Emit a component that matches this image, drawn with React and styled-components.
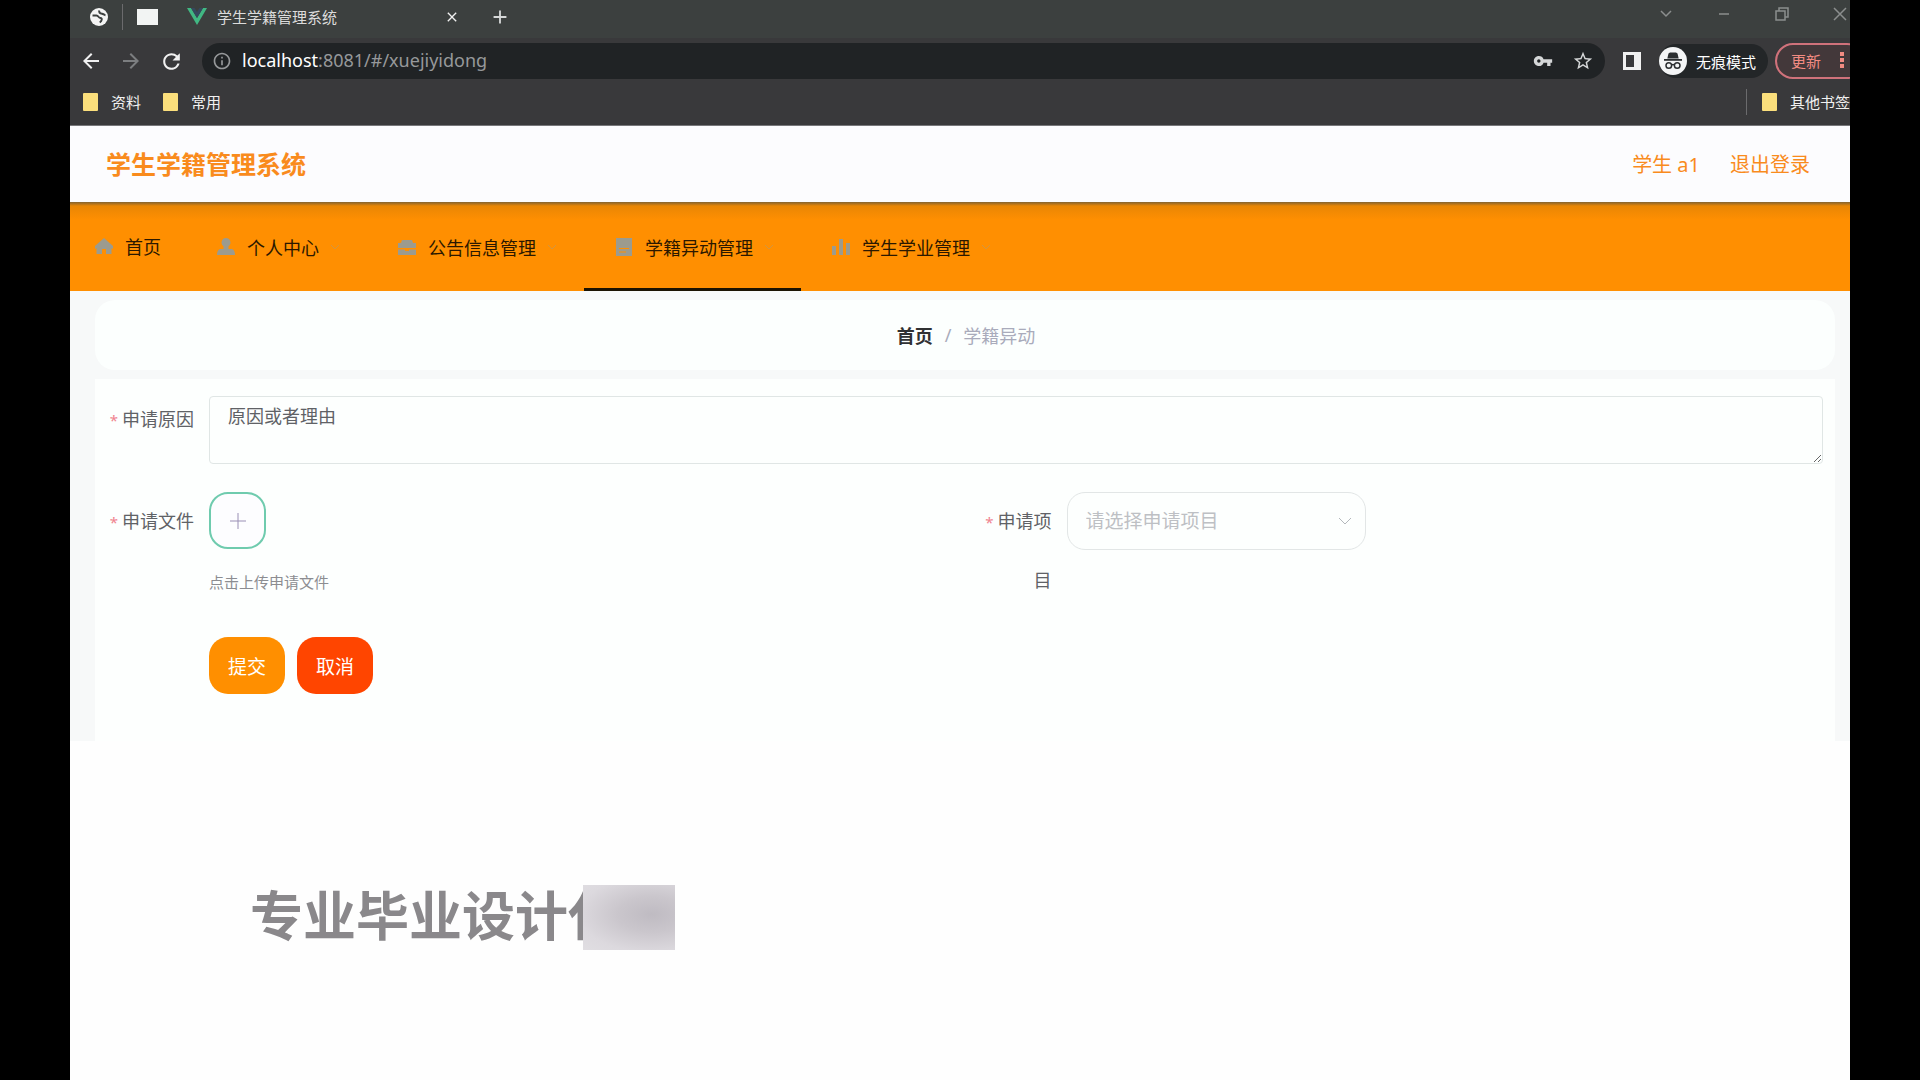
import styled, { createGlobalStyle } from "styled-components";
import {
	MdArrowBack,
	MdArrowForward,
	MdRefresh,
	MdInfoOutline,
	MdVpnKey,
	MdStarBorder,
	MdClose,
	MdAdd,
} from "react-icons/md";

const GlobalStyle = createGlobalStyle`
	* {
		box-sizing: border-box;
	}
	body {
		margin: 0;
		background: #000;
		font-family: "Noto Sans", "Noto Sans CJK SC", sans-serif;
		font-size: 18px;
	}
	a {
		color: inherit;
		text-decoration: none;
	}
	button,
	input,
	select,
	textarea {
		font-family: inherit;
		margin: 0;
	}
	svg {
		display: block;
		flex: none;
	}
`;

const Stage = styled.div`
	display: flex;
	flex-direction: column;
	position: relative;
	min-height: 100vh;
	margin: 0 70px;
	background: #fefefe;
	overflow: hidden;
`;

/* browser frame */
const Chrome = styled.header`
	background: #39393b;
	color: #f1f1f1;
	font-size: 15px;
	border-bottom: 1px solid #77777a;
	overflow: hidden;
	white-space: nowrap;
`;
const TabStrip = styled.div`
	display: flex;
	align-items: center;
	height: 38px;
	padding-bottom: 5px;
	background: #3c403f;
`;
const PinnedTabs = styled.div`
	display: flex;
	align-items: center;
	gap: 14px;
	padding-left: 20px;
	width: 103px;
`;
const Divider = styled.span`
	width: 1px;
	height: 26px;
	background: #6b6b6d;
`;
const Tab = styled.div`
	display: flex;
	align-items: center;
	gap: 10px;
	width: 299px;
	height: 38px;
	padding: 0 12px 0 14px;
	color: #dcdcdc;
	span {
		flex: 1;
	}
`;
const IconButton = styled.button`
	display: flex;
	align-items: center;
	justify-content: center;
	width: ${(props) => props.$size || 20}px;
	height: ${(props) => props.$size || 20}px;
	padding: 0;
	border: 0;
	background: none;
	color: ${(props) => props.$color || "#f1f1f1"};
`;
const WindowButtons = styled.div`
	display: flex;
	gap: 38px;
	margin-left: auto;
	padding-bottom: 6px;
`;
const Toolbar = styled.div`
	display: flex;
	align-items: center;
	height: 46px;
	padding-left: 9px;
`;
const NavButtons = styled.div`
	display: flex;
	gap: 16px;
	width: 123px;
`;
const AddressBar = styled.div`
	display: flex;
	flex: 1;
	align-items: center;
	height: 36px;
	padding: 0 10px;
	gap: 10px;
	border-radius: 18px;
	background: #202325;
	color: #96989a;
	font-size: 18px;
	b {
		font-weight: 400;
		color: #fff;
	}
	p {
		flex: 1;
		margin: 0;
		padding-bottom: 2px;
	}
`;
const AddressActions = styled.div`
	display: flex;
	gap: 16px;
`;
const Incognito = styled.div`
	display: flex;
	align-items: center;
	gap: 9px;
	width: 109px;
	height: 34px;
	margin-right: 7px;
	border-radius: 17px;
	background: #232628;
	color: #fff;
`;
const UpdateButton = styled.button`
	display: flex;
	align-items: center;
	justify-content: space-between;
	width: 90px;
	height: 36px;
	margin-right: -15px;
	padding: 0 19px 2px 14px;
	border: 2px solid #d0727b;
	border-radius: 18px;
	background: #43383a;
	color: #f28b82;
	font-size: 15px;
`;
const Bookmarks = styled.nav`
	display: flex;
	align-items: center;
	height: 41px;
	padding: 0 0 6px 13px;
	gap: 22px;
`;
const Bookmark = styled.a`
	display: flex;
	align-items: center;
	gap: 13px;
	&::before {
		content: "";
		width: 15px;
		height: 18px;
		border-radius: 1px;
		background: #fbdf7c;
	}
`;
const OtherBookmarks = styled.div`
	display: flex;
	align-items: center;
	gap: 15px;
	margin-left: auto;
`;

/* site */
const SiteHeader = styled.header`
	display: flex;
	align-items: center;
	justify-content: space-between;
	height: 76px;
	padding: 0 40px 2px 36px;
	background: #fcfcfe;
	color: #f98b1d;
	font-size: 20px;
	h1 {
		margin: 0;
		font-size: 25px;
	}
`;
const UserLinks = styled.div`
	display: flex;
	gap: 30px;
`;
const Menu = styled.nav`
	display: flex;
	height: 89px;
	background: linear-gradient(#836331 0, #e98604 4px, #ff8f01 18px, #ff8f01);
	color: #2b1800;
`;
const MenuItem = styled.a`
	display: flex;
	align-items: center;
	gap: 12px;
	padding: 4px 28px 0 31px;
	border-bottom: 3px solid ${(props) => (props.$active ? "#1b1302" : "transparent")};
	&:first-child {
		padding: 2px 25px 0;
	}
`;
const Content = styled.main`
	display: flex;
	flex-direction: column;
	gap: 9px;
	height: 450px;
	padding: 9px 15px 0 25px;
	background: #f7f9f9;
`;
const Breadcrumb = styled.nav`
	display: flex;
	align-items: center;
	justify-content: center;
	gap: 12px;
	height: 70px;
	padding-left: 2px;
	border-radius: 20px;
	background: #fcfffe;
	color: #a9abbb;
	a {
		font-weight: 700;
		color: #303133;
	}
`;
const Form = styled.form`
	display: grid;
	grid-template-columns: 1fr 1fr;
	grid-auto-rows: min-content;
	row-gap: 28px;
	flex: 1;
	padding: 17px 12px 0 13px;
	background: #fdfffe;
`;
const Field = styled.div`
	display: flex;
	grid-column: ${(props) => (props.$wide ? "1 / -1" : "auto")};
`;
const Label = styled.label`
	width: 101px;
	padding-right: 15px;
	text-align: right;
	line-height: ${(props) => props.$line || 58}px;
	color: #606266;
	&::before {
		content: "*";
		margin-right: 4px;
		font-size: 15px;
		color: #f0838f;
	}
`;
const Reason = styled.textarea`
	flex: 1;
	height: 68px;
	padding: 6px 18px;
	border: 1px solid #e0e6e5;
	border-radius: 4px;
	background: #fdfffe;
	color: #606266;
	font-size: 18px;
	line-height: 27px;
	outline: 0;
`;
const Upload = styled.div`
	display: flex;
	flex-direction: column;
	align-items: flex-start;
	gap: 20px;
	color: #8c8d91;
	font-size: 15px;
	line-height: 26px;
`;
const UploadButton = styled.button`
	display: flex;
	align-items: center;
	justify-content: center;
	width: 57px;
	height: 57px;
	padding: 0;
	border: 2px solid #6fcbae;
	border-radius: 19px;
	background: #fdfdff;
`;
const SelectBox = styled.div`
	display: grid;
	align-items: center;
	width: 299px;
	height: 58px;
	svg {
		grid-area: 1 / 1;
		justify-self: end;
		margin-right: 14px;
		pointer-events: none;
	}
`;
const Select = styled.select`
	grid-area: 1 / 1;
	appearance: none;
	width: 100%;
	height: 58px;
	padding: 0 18px;
	border: 1px solid #e2e6e6;
	border-radius: 18px;
	background: #fdfffe;
	color: #bdc0c4;
	font-size: 19px;
`;
const Actions = styled.div`
	display: flex;
	gap: 12px;
	padding-left: 101px;
`;
const ActionButton = styled.button`
	width: 76px;
	height: 57px;
	padding: 0;
	border: 0;
	border-radius: 19px;
	background: ${(props) => (props.$danger ? "#ff4500" : "#ff8f00")};
	color: #fff;
	font-size: 19px;
`;

/* floats over the page */
const Watermark = styled.div`
	display: flex;
	position: absolute;
	left: 180px;
	top: 885px;
	color: #8a888b;
	font-size: 53px;
	font-weight: 700;
	line-height: 61px;
	span {
		width: 333px;
		overflow: hidden;
		white-space: nowrap;
	}
	&::after {
		content: "";
		width: 92px;
		height: 65px;
		background: radial-gradient(
			ellipse at 75% 45%,
			#bfbbc2 0,
			#cac6cc 35%,
			#dcd9de 75%,
			#e0dee2 100%
		);
	}
`;

function Globe() {
	return (
		<svg width="18" height="18" viewBox="0 0 18 18">
			<circle cx="9" cy="9" r="9" fill="#f4f4f4" />
			<path
				d="M2.500 7.500h4c2 0 2 2.500 4 2.500s1.500 3-.8 4.500M9.500 2.500c-1 2 .5 3 2.500 3.200 1.500.2 2 1.300 3.500 1.500"
				fill="none"
				stroke="#3c403f"
				strokeWidth="2"
			/>
		</svg>
	);
}

function VueLogo() {
	return (
		<svg width="20" height="17" viewBox="0 0 20 17">
			<path d="M0 0h4l6 10 6-10h4L10 17z" fill="#41b883" />
			<path d="M4 0h3.500L10 4l2.500-4H16l-6 10z" fill="#35495e" />
		</svg>
	);
}

function IncognitoIcon() {
	return (
		<svg width="28" height="28" viewBox="0 0 28 28">
			<circle cx="14" cy="14" r="14" fill="#f4f5f6" />
			<path d="M9.500 6.500 11 5.500h6l1.500 1 1.200 5H8.300z" fill="#2b2e30" />
			<path d="M5 12h18v1.800H5z" fill="#2b2e30" />
			<g fill="none" stroke="#2b2e30" strokeWidth="1.500">
				<circle cx="9.800" cy="18.500" r="2.800" />
				<circle cx="18.200" cy="18.500" r="2.800" />
				<path d="M12.600 18q1.400-1 2.800 0" />
			</g>
		</svg>
	);
}

const windowPaths = {
	更多: "M5 7l5 5 5-5",
	最小化: "M5 10h10",
	还原: "M4 7h9v9H4zM7 7V4h9v9h-3",
	关闭: "M4 4l12 12M16 4L4 16",
};

const menuPaths = {
	home: "M9 1 0 9v3l1.500-1v6H7v-5h4v5h5.500v-6l1.500 1V9z",
	user: "M9 0a4.500 4.500 0 0 1 2.500 8.200V11H15q3 1 3 6H0q0-5 3-6h3.500V8.200A4.500 4.500 0 0 1 9 0z",
	notice: "M4 2h10l1 3h3v5H0V5h3zM0 11.500h7v1.500h4v-1.500h7V17H0z",
	record: "M1 0h16v18H1zM4 10v1h10v-1zM4 13.500v1h7v-1z",
	chart: "M0 8h4v9H0zM7 1h4v16H7zM14 5h4v12h-4z",
};

const menu = [
	{ name: "首页", icon: "home", plain: true },
	{ name: "个人中心", icon: "user" },
	{ name: "公告信息管理", icon: "notice" },
	{ name: "学籍异动管理", icon: "record", active: true },
	{ name: "学生学业管理", icon: "chart" },
];

function Browser() {
	return (
		<Chrome>
			<TabStrip>
				<PinnedTabs>
					<Globe />
					<Divider />
					<svg width="21" height="16">
						<path d="M0 0h21v16H0z" fill="#f2f4f3" />
					</svg>
				</PinnedTabs>
				<Tab>
					<VueLogo />
					<span>学生学籍管理系统</span>
					<IconButton aria-label="关闭标签页" $size={16}>
						<MdClose size={16} />
					</IconButton>
				</Tab>
				<IconButton aria-label="新标签页" $size={56} $color="#d6d8d8">
					<MdAdd size={22} />
				</IconButton>
				<WindowButtons>
					{Object.entries(windowPaths).map(([name, path]) => (
						<IconButton key={name} aria-label={name}>
							<svg
								width="20"
								height="20"
								fill="none"
								stroke="#8b8e8e"
								strokeWidth="1.500"
							>
								<path d={path} />
							</svg>
						</IconButton>
					))}
				</WindowButtons>
			</TabStrip>
			<Toolbar>
				<NavButtons>
					<IconButton aria-label="后退" $size={24}>
						<MdArrowBack size={24} />
					</IconButton>
					<IconButton aria-label="前进" $size={24} $color="#7c7e80">
						<MdArrowForward size={24} />
					</IconButton>
					<IconButton aria-label="刷新" $size={24}>
						<MdRefresh size={25} />
					</IconButton>
				</NavButtons>
				<AddressBar>
					<MdInfoOutline size={20} />
					<p>
						<b>localhost</b>:8081/#/xuejiyidong
					</p>
					<AddressActions>
						<IconButton aria-label="密码" $size={24} $color="#d5d7d8">
							<MdVpnKey size={20} />
						</IconButton>
						<IconButton aria-label="收藏" $size={24} $color="#d5d7d8">
							<MdStarBorder size={22} />
						</IconButton>
					</AddressActions>
				</AddressBar>
				<IconButton aria-label="侧边栏" $size={54}>
					<svg width="18" height="18">
						<path
							d="M0 0h18v18H0zM3 3v12h8V3z"
							fill="#f1f1f1"
							fillRule="evenodd"
						/>
					</svg>
				</IconButton>
				<Incognito>
					<IncognitoIcon />
					无痕模式
				</Incognito>
				<UpdateButton>
					更新
					<svg width="4" height="18" fill="#f28b82">
						<path d="M0 1h4v4H0zM0 7h4v4H0zM0 13h4v4H0z" />
					</svg>
				</UpdateButton>
			</Toolbar>
			<Bookmarks>
				<Bookmark href="#">资料</Bookmark>
				<Bookmark href="#">常用</Bookmark>
				<OtherBookmarks>
					<Divider />
					<Bookmark href="#">其他书签</Bookmark>
				</OtherBookmarks>
			</Bookmarks>
		</Chrome>
	);
}

export default function App() {
	return (
		<Stage>
			<GlobalStyle />
			<Browser />
			<SiteHeader>
				<h1>学生学籍管理系统</h1>
				<UserLinks>
					<a href="#">学生 a1</a>
					<a href="#">退出登录</a>
				</UserLinks>
			</SiteHeader>
			<Menu>
				{menu.map((item) => (
					<MenuItem key={item.name} href="#" $active={item.active}>
						<svg width="18" height="18" fill="#9c9b8e" fillRule="evenodd">
							<path d={menuPaths[item.icon]} />
						</svg>
						{item.name}
						{item.plain ? (
							""
						) : (
							<svg width="8" height="6" fill="none" stroke="#d3953f">
								<path d="M0 1l4 4 4-4" />
							</svg>
						)}
					</MenuItem>
				))}
			</Menu>
			<Content>
				<Breadcrumb>
					<a href="#">首页</a>
					<span>/</span>
					<span>学籍异动</span>
				</Breadcrumb>
				<Form onSubmit={(e) => e.preventDefault()}>
					<Field $wide>
						<Label htmlFor="reason" $line={46}>
							申请原因
						</Label>
						<Reason id="reason" defaultValue="原因或者理由" />
					</Field>
					<Field>
						<Label htmlFor="file">申请文件</Label>
						<Upload>
							<UploadButton id="file" type="button" aria-label="上传">
								<svg width="16" height="16" stroke="#9a8fb5" strokeWidth="1">
									<path d="M8 0v16M0 8h16" />
								</svg>
							</UploadButton>
							点击上传申请文件
						</Upload>
					</Field>
					<Field>
						<Label htmlFor="project">
							申请项
							<br />目
						</Label>
						<SelectBox>
							<Select id="project" defaultValue="">
								<option value="">请选择申请项目</option>
							</Select>
							<svg width="14" height="10" fill="none" stroke="#b4b8bc">
								<path d="M1 2l6 6 6-6" />
							</svg>
						</SelectBox>
					</Field>
					<Actions>
						<ActionButton type="submit">提交</ActionButton>
						<ActionButton type="button" $danger>
							取消
						</ActionButton>
					</Actions>
				</Form>
			</Content>
			<Watermark>
				<span>专业毕业设计代</span>
			</Watermark>
		</Stage>
	);
}
